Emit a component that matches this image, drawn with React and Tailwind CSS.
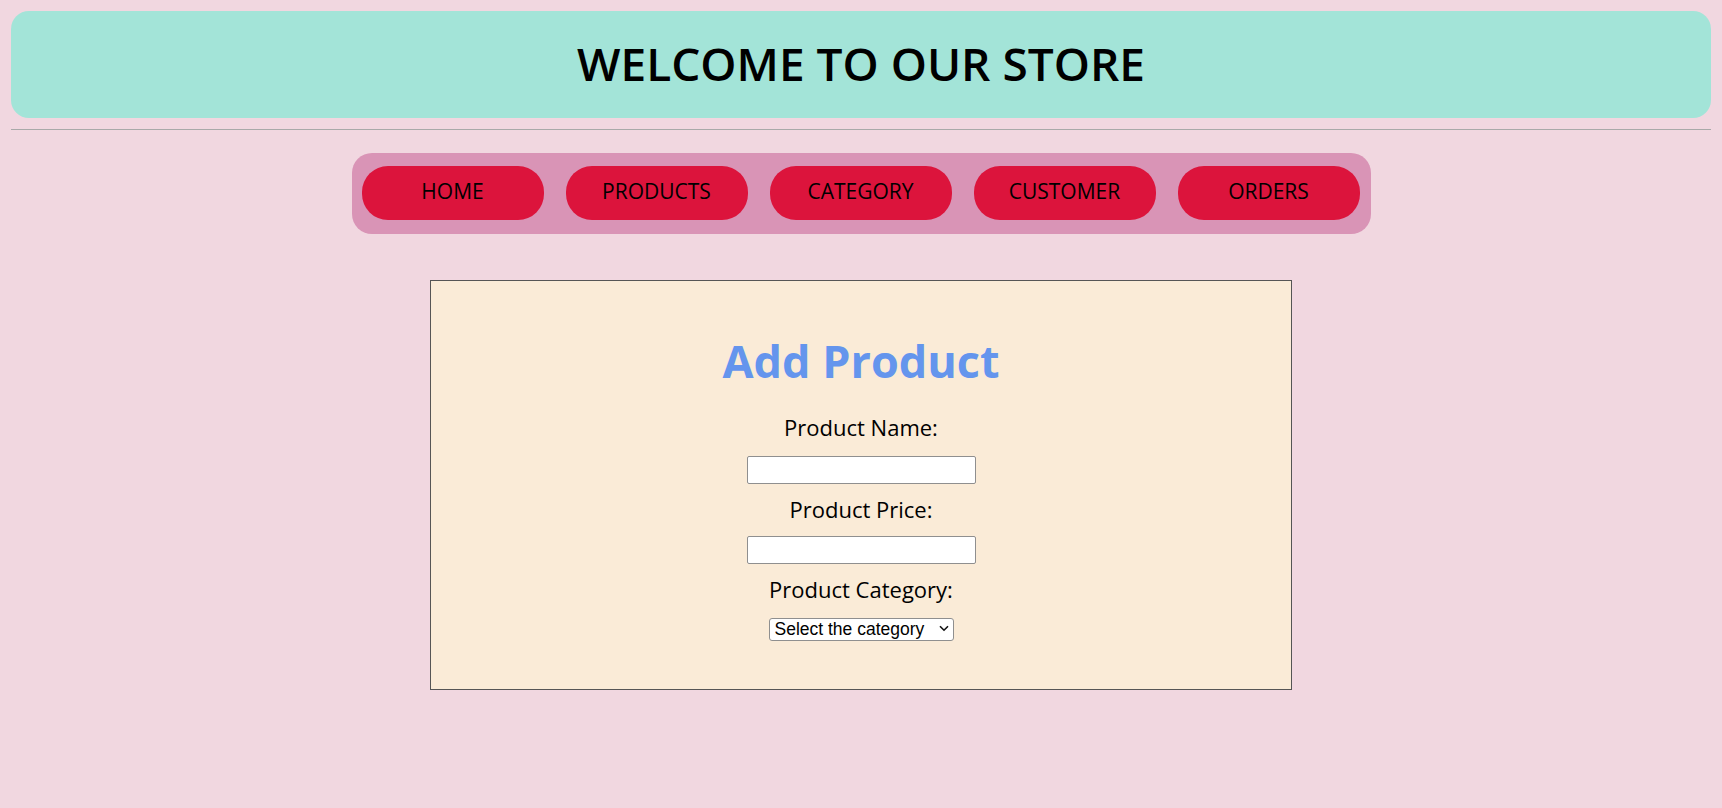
import React from "react";

const navItems = ["HOME", "PRODUCTS", "CATEGORY", "CUSTOMER", "ORDERS"];

export default function App() {
  return (
    <div
      className="min-h-[808px] w-full bg-[#f1d7e0] pt-[11px] pb-[40px]"
      style={{ fontFamily: '"Open Sans", "DejaVu Sans", sans-serif' }}
    >
      <header className="mx-[11px] flex h-[107px] items-center justify-center rounded-[18px] bg-[#a3e4d8] pb-[4px]">
        <h1 className="text-[46px] font-semibold leading-[46px] text-black">WELCOME TO OUR STORE</h1>
      </header>

      <div className="mx-[11px] mt-[11px] h-px bg-[#a9a9a9]" />

      <div className="mt-[23px] flex justify-center">
        <nav className="flex gap-[22px] rounded-[20px] bg-[#d994b6] pl-[10px] pr-[11px] pt-[13px] pb-[14px]">
          {navItems.map((item) => (
            <a
              key={item}
              href="#"
              className="flex h-[54px] w-[182px] items-center justify-center rounded-[26px] bg-[#dc143c] pb-[3px] text-[21px] leading-[21px] text-black"
            >
              {item}
            </a>
          ))}
        </nav>
      </div>

      <div className="mt-[46px] flex justify-center">
        <form className="flex h-[410px] w-[862px] flex-col items-center border border-[#555555] bg-[#faebd7] pt-[57px]">
          <h2 className="text-[45px] font-bold leading-[45px] text-[#6495ed]">Add Product</h2>

          <label className="mt-[33px] text-[22px] leading-[22px] text-black">Product Name:</label>
          <input
            type="text"
            className="mt-[18px] h-[28px] w-[229px] rounded-[2px] border border-[#8f8f8f] bg-white px-[2px] text-[13px]"
          />

          <label className="mt-[14px] text-[22px] leading-[22px] text-black">Product Price:</label>
          <input
            type="text"
            className="mt-[16px] h-[28px] w-[229px] rounded-[2px] border border-[#8f8f8f] bg-white px-[2px] text-[13px]"
          />

          <label className="mt-[14px] text-[22px] leading-[22px] text-black">Product Category:</label>
          <div className="relative mt-[17px] h-[23px] w-[185px]">
            <select
              className="h-[23px] w-[185px] appearance-none rounded-[3px] border border-[#8f8f8f] bg-white pl-[5px] text-[17.5px] leading-[21px] text-black"
              style={{ fontFamily: '"Liberation Sans", Arial, sans-serif' }}
              defaultValue=""
            >
              <option value="">Select the category</option>
            </select>
            <svg
              className="pointer-events-none absolute right-[5px] top-[8px]"
              width="10"
              height="7"
              viewBox="0 0 10 7"
              fill="none"
            >
              <path d="M1 1.2 L5 5.2 L9 1.2" stroke="#111" strokeWidth="1.6" />
            </svg>
          </div>
        </form>
      </div>
    </div>
  );
}
